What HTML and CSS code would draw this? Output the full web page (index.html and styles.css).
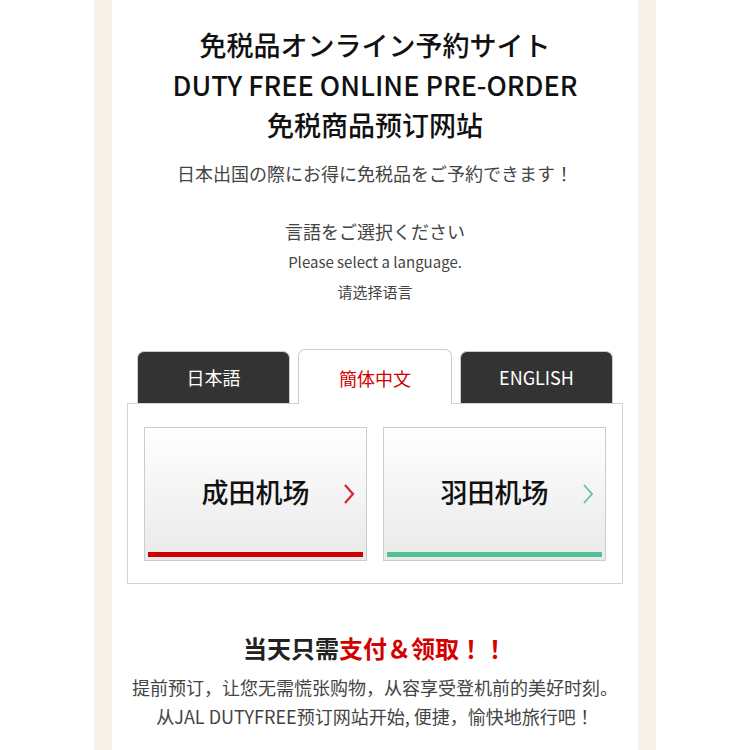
FILE: index.html
```html
<!DOCTYPE html>
<html lang="ja">
<head>
    <meta charset="UTF-8">
    <title>免税品オンライン予約サイト</title>
    <link rel="stylesheet" href="styles.css">
</head>
<body>
    <div id="marco">
    <div id="contenido">

        <header>
            <h1>免税品オンライン予約サイト<br>DUTY FREE ONLINE PRE-ORDER<br>免税商品预订网站</h1>
            <p class="lema">日本出国の際にお得に免税品をご予約できます！</p>
        </header>

        <div id="idioma">
            <p class="idioma-ja">言語をご選択ください</p>
            <p class="idioma-en">Please select a language.</p>
            <p class="idioma-zh">请选择语言</p>
        </div>

        <div id="pestanas">
            <div class="pestana">日本語</div>
            <div class="pestana activa">簡体中文</div>
            <div class="pestana">ENGLISH</div>
        </div>

        <div id="panel">
            <a class="aeropuerto narita" href="#">
                成田机场
                <svg class="flecha" width="12" height="22" viewBox="0 0 12 22"><polyline points="2,2 10,11 2,20" fill="none" stroke-width="2.2"/></svg>
            </a>
            <a class="aeropuerto haneda" href="#">
                羽田机场
                <svg class="flecha" width="12" height="22" viewBox="0 0 12 22"><polyline points="2,2 10,11 2,20" fill="none" stroke-width="1.8"/></svg>
            </a>
        </div>

        <div id="aviso">
            <h2>当天只需<span class="rojo">支付＆领取！！</span></h2>
            <p>提前预订，让您无需慌张购物，从容享受登机前的美好时刻。<br>从JAL DUTYFREE预订网站开始, 便捷，愉快地旅行吧！</p>
        </div>

    </div>
    </div>
</body>
</html>
```

FILE: styles.css
```css
body {
    font-family: "Noto Sans CJK JP", "Noto Sans", sans-serif;
    margin: 0;
    background-color: #fff;
    color: #111;
}

#marco {
    width: 526px;
    margin: 0 auto;
    padding: 0 18px;
    background-color: #f7f3e8;
    min-height: 750px;
}

#contenido {
    background-color: #fff;
    min-height: 750px;
    padding-top: 25px;
    text-align: center;
}

h1 {
    margin: 0;
    font-size: 27px;
    font-weight: 500;
    line-height: 40px;
}

.lema {
    margin: 14px 0 0;
    font-size: 18px;
    line-height: 28px;
    color: #444;
}

#idioma {
    margin-top: 30px;
    color: #444;
}
#idioma p {
    margin: 0;
}
.idioma-ja {
    font-size: 18px;
    line-height: 28px;
}
.idioma-en {
    font-size: 15px;
    line-height: 34px;
}
.idioma-zh {
    font-size: 15px;
    line-height: 26px;
}

#pestanas {
    display: flex;
    gap: 8px;
    margin: 44px 15px 0;
    padding: 0 10px;
    align-items: flex-end;
}
.pestana {
    width: 153px;
    height: 52px;
    box-sizing: border-box;
    border: 1px solid #ccc;
    border-bottom: none;
    border-radius: 7px 7px 0 0;
    background-color: #333;
    color: #fff;
    font-size: 18px;
    line-height: 50px;
}
.pestana.activa {
    width: 154px;
    height: 55px;
    line-height: 56px;
    margin-bottom: -1px;
    background-color: #fff;
    color: #d40000;
    position: relative;
}

#panel {
    margin: 0 15px;
    border: 1px solid #d3d3d3;
    padding: 23px 16px 22px;
    display: flex;
    gap: 16px;
}

.aeropuerto {
    position: relative;
    display: block;
    width: 223px;
    height: 134px;
    box-sizing: border-box;
    border: 1px solid #ccc;
    background: linear-gradient(#fff, #e9e9e9);
    color: #111;
    text-decoration: none;
    font-size: 27px;
    font-weight: 500;
    line-height: 128px;
}
.aeropuerto::after {
    content: "";
    position: absolute;
    left: 3px;
    right: 3px;
    bottom: 3px;
    height: 5px;
}
.narita::after {
    background-color: #cc0000;
}
.haneda::after {
    background-color: #4fc393;
}
.flecha {
    position: absolute;
    right: 11px;
    top: 55px;
}
.narita .flecha {
    stroke: #d9232e;
}
.haneda .flecha {
    stroke: #5cc79d;
}

#aviso {
    margin-top: 46px;
}
#aviso h2 {
    margin: 0;
    font-size: 24px;
    font-weight: 700;
    line-height: 36px;
    color: #222;
}
.rojo {
    color: #d40000;
}
#aviso p {
    margin: 7px 0 0;
    font-size: 18px;
    line-height: 29px;
    color: #444;
}
```
